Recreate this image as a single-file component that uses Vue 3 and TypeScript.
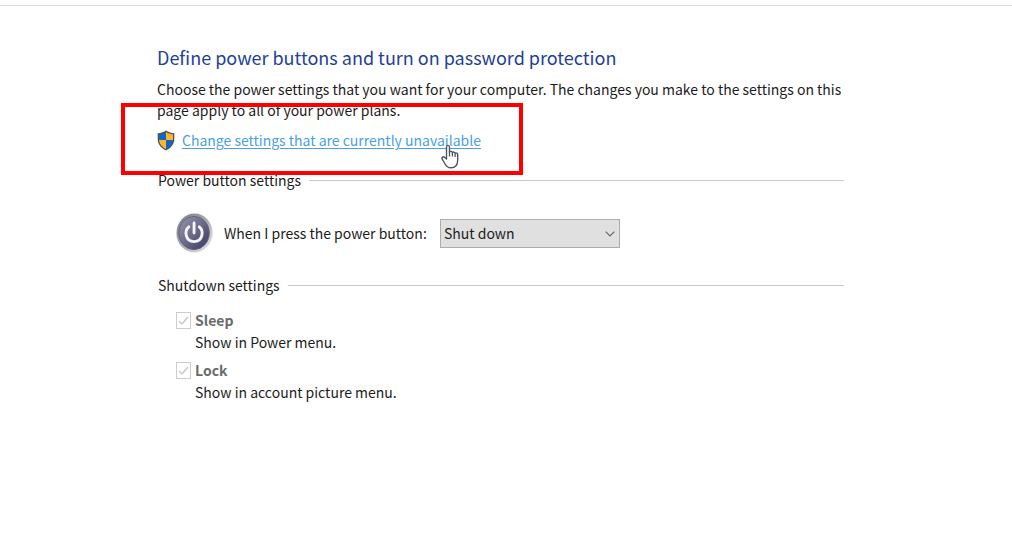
<script setup lang="ts">
import { ref } from 'vue'

interface ShutdownOption {
  id: string
  label: string
  description: string
  checked: boolean
}

const powerAction = ref('Shut down')
const actions: string[] = ['Do nothing', 'Sleep', 'Hibernate', 'Shut down']
const options: ShutdownOption[] = [
  { id: 'sleep', label: 'Sleep', description: 'Show in Power menu.', checked: true },
  { id: 'lock', label: 'Lock', description: 'Show in account picture menu.', checked: true },
]
</script>

<template>
  <div class="window">
    <main class="content">
      <h1>Define power buttons and turn on password protection</h1>
      <p class="intro">
        Choose the power settings that you want for your computer. The changes you make to the settings on this page apply to all of your power plans.
      </p>

      <div class="elevate">
        <svg class="shield" viewBox="0 0 18 21" aria-hidden="true">
          <path d="M9 .5C6.800 2 4 3 .700 3.200V9c0 5.200 3.400 9 8.300 11.500C13.900 18 17.300 14.200 17.300 9V3.200C14 3 11.200 2 9 .5Z" fill="#4d5358" />
          <path d="M9 2C7 3.300 4.700 4.100 2 4.400V10H9Z" fill="#1267c4" />
          <path d="M9 2c2 1.300 4.300 2.100 7 2.400V10H9Z" fill="#fbb62d" />
          <path d="M2 10c.300 4 3 7 7 9.200V10Z" fill="#fbb62d" />
          <path d="M16 10c-.300 4-3 7-7 9.200V10Z" fill="#1267c4" />
        </svg>
        <a href="#">Change settings that are currently unavailable</a>
        <div class="highlight"></div>
        <svg class="pointer" viewBox="0 0 18 25" aria-hidden="true">
          <path d="M5.500 15V3.200c0-2.400 3-2.400 3 0V8c.500-1 2.700-.800 2.900.500.700-.900 2.600-.500 2.700.800.900-.600 2.600-.100 2.600 1.500V16c0 4.800-2.500 7.800-6.700 7.800-3.500 0-5-1.700-6.200-4.300L1.200 15.200c-1-2 1.200-3.100 2.500-1.700Z" fill="#fff" stroke="#50545b" stroke-width="1.400" stroke-linejoin="round" />
          <path d="M8.500 7.500v5M11.400 8.500v4M14.100 9.500v3.500" fill="none" stroke="#50545b" stroke-width="1.300" />
        </svg>
      </div>

      <section>
        <h2><span>Power button settings</span></h2>
        <div class="power-row">
          <svg class="power" viewBox="0 0 40 42" aria-hidden="true">
            <defs>
              <linearGradient id="rim" x1="0" y1="0" x2="1" y2="1">
                <stop offset="0" stop-color="#77777d" />
                <stop offset=".5" stop-color="#a9a9ae" />
                <stop offset="1" stop-color="#eeeeef" />
              </linearGradient>
              <linearGradient id="face" x1="0" y1="0" x2="1" y2="1">
                <stop offset="0" stop-color="#9797b0" />
                <stop offset=".48" stop-color="#6c6b8b" />
                <stop offset="1" stop-color="#38365e" />
              </linearGradient>
            </defs>
            <ellipse cx="19.500" cy="21" rx="19" ry="20.500" fill="url(#rim)" />
            <ellipse cx="19" cy="21" rx="16" ry="17.500" fill="url(#face)" stroke="#62627a" />
            <path d="M13.500 14.500C8.500 18.500 9.600 30 19 30S29.500 18.500 24.500 14.500" fill="none" stroke="#f5f5f8" stroke-width="3" stroke-linecap="round" />
            <path d="M19 10.500V21" stroke="#f5f5f8" stroke-width="3" stroke-linecap="round" />
          </svg>
          <label for="power-action">When I press the power button:</label>
          <div class="select-box">
            <select id="power-action" v-model="powerAction">
              <option v-for="action in actions" :key="action">{{ action }}</option>
            </select>
            <svg class="chevron" viewBox="0 0 10 6" aria-hidden="true">
              <path d="M.700.700 5 5 9.300.700" fill="none" stroke="#666" stroke-width="1.200" />
            </svg>
          </div>
        </div>
      </section>

      <section>
        <h2><span>Shutdown settings</span></h2>
        <ul>
          <li v-for="option in options" :key="option.id">
            <input :id="option.id" type="checkbox" :checked="option.checked" disabled />
            <label :for="option.id">{{ option.label }}</label>
            <p>{{ option.description }}</p>
          </li>
        </ul>
      </section>
    </main>
  </div>
</template>

<style>
body {
  margin: 0;
  background: #fff;
}
</style>

<style scoped>
.window {
  margin-top: 5px;
  border-top: 1px solid #dcdcdc;
  color: #1c1c1c;
  font: 14px/22px "Noto Sans CJK SC", "Noto Sans", sans-serif;
}
.content {
  padding: 37px 168px 40px 157px;
}
h1 {
  margin: 0;
  color: #233f98;
  font-size: 18px;
  font-weight: 400;
  line-height: 28px;
}
p {
  margin: 0;
}
.intro {
  margin-top: 8px;
  line-height: 21px;
}
.elevate {
  position: relative;
  display: flex;
  align-items: center;
  gap: 7px;
  height: 22px;
  margin-top: 8px;
}
.shield {
  width: 18px;
  height: 21px;
}
a {
  color: #4a9fe5;
  text-underline-offset: 2px;
}
.highlight {
  position: absolute;
  z-index: 1;
  left: -36px;
  top: -26px;
  box-sizing: border-box;
  width: 402px;
  height: 72px;
  border: 4px solid #f00;
  pointer-events: none;
}
.pointer {
  position: absolute;
  z-index: 2;
  left: 284px;
  top: 15px;
  width: 18px;
  height: 25px;
}
section {
  margin-top: 18px;
}
h2 {
  display: flex;
  align-items: center;
  gap: 8px;
  margin: 0 0 0 1px;
  font-size: 14px;
  font-weight: 400;
}
h2::after {
  content: "";
  flex: 1;
  height: 1px;
  background: #c9c9c9;
}
.power-row {
  display: flex;
  align-items: center;
  margin: 21px 0 20px 19px;
}
.power {
  width: 38px;
  height: 42px;
}
.power-row label {
  width: 216px;
  margin-left: 10px;
}
.select-box {
  position: relative;
  width: 180px;
}
select {
  appearance: none;
  box-sizing: border-box;
  width: 100%;
  height: 29px;
  padding: 0 24px 0 3px;
  border: 1px solid #adadad;
  border-radius: 0;
  background: #e0e0e0;
  color: #1c1c1c;
  font: inherit;
}
.chevron {
  position: absolute;
  right: 5px;
  top: 12px;
  width: 10px;
  height: 6px;
  pointer-events: none;
}
ul {
  margin: 13px 0 0 19px;
  padding: 0;
  list-style: none;
}
li {
  display: grid;
  grid-template-columns: 15px 1fr;
  align-items: center;
  column-gap: 4px;
  margin-bottom: 6px;
}
li label {
  color: #6b6b6b;
  font-weight: 700;
}
li p {
  grid-column: 2;
}
input {
  appearance: none;
  box-sizing: border-box;
  width: 15px;
  height: 17px;
  margin: 0;
  border: 1px solid #cccccc;
  background: #fff;
}
input:checked {
  background: url("data:image/svg+xml,%3Csvg xmlns='http://www.w3.org/2000/svg' viewBox='0 0 13 15'%3E%3Cpath d='M2 8l3 3 6-7' fill='none' stroke='%23c8c8c8' stroke-width='1.500'/%3E%3C/svg%3E") center / 13px 15px no-repeat;
}
</style>
